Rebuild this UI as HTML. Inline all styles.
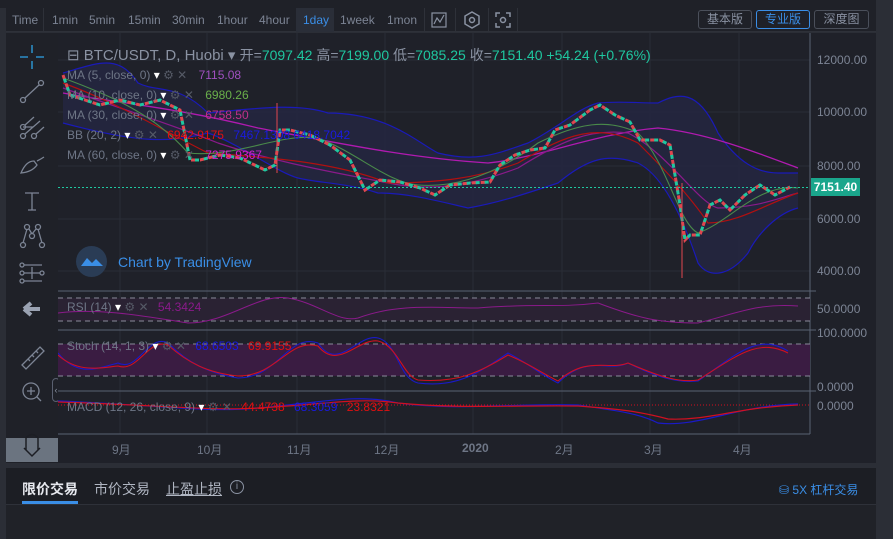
<!DOCTYPE html>
<html><head><meta charset="utf-8"><style>
*{margin:0;padding:0;box-sizing:border-box}
body{width:893px;height:539px;overflow:hidden;background:#2b2e36;font-family:"Liberation Sans","Noto Sans CJK SC",sans-serif;position:relative}
.abs{position:absolute}
.tb{left:6px;top:8px;width:870px;height:24px;background:#1f2128;border-bottom:1px solid #2e3139;font-size:12px;color:#7c8494}
.tb span{position:absolute;top:5px}
.btn{position:absolute;top:2px;height:19px;border:1px solid #4a4f5a;border-radius:3px;font-size:12px;color:#8a92a2;text-align:center;line-height:17px;width:54px}
.lbl{font-size:12px;color:#6e7686;position:absolute;white-space:nowrap}
</style></head><body>
<div class="abs" style="left:0;top:0;width:893px;height:8px;background:#1f2128"></div>
<div class="abs" style="left:876px;top:0;width:17px;height:539px;background:#2b2e36"></div>
<div class="abs tb">
<span style="left:6px">Time</span>
<div class="abs" style="left:37px;top:0;width:1px;height:24px;background:#2e3139"></div>
<span style="left:46px">1min</span><span style="left:83px">5min</span><span style="left:122px">15min</span><span style="left:166px">30min</span><span style="left:211px">1hour</span><span style="left:253px">4hour</span>
<div class="abs" style="left:290px;top:0;width:38px;height:24px;background:#2a2e38"></div>
<span style="left:297px;color:#3a8ee6">1day</span><span style="left:334px">1week</span><span style="left:381px">1mon</span>
<div class="abs" style="left:418px;top:0;width:1px;height:24px;background:#2e3139"></div>
<svg class="abs" style="left:425px;top:4px" width="16" height="16"><rect x="1" y="1" width="14" height="14" fill="none" stroke="#8a92a2" stroke-width="1.2"/><path d="M3 12 L6 6 L9 10 L13 3" fill="none" stroke="#8a92a2" stroke-width="1.2"/></svg>
<div class="abs" style="left:449px;top:0;width:1px;height:24px;background:#2e3139"></div>
<svg class="abs" style="left:457px;top:3px" width="18" height="18"><path d="M9 1 L16 5 L16 13 L9 17 L2 13 L2 5 Z" fill="none" stroke="#8a92a2" stroke-width="1.5"/><circle cx="9" cy="9" r="2.5" fill="none" stroke="#8a92a2" stroke-width="1.5"/></svg>
<div class="abs" style="left:482px;top:0;width:1px;height:24px;background:#2e3139"></div>
<svg class="abs" style="left:489px;top:4px" width="16" height="16" fill="none" stroke="#8a92a2" stroke-width="1.5"><path d="M1 5V1H5M11 1H15V5M15 11V15H11M5 15H1V11"/><circle cx="8" cy="8" r="2.5"/></svg>
<div class="abs" style="left:511px;top:0;width:1px;height:24px;background:#2e3139"></div>
<div class="btn" style="left:692px">基本版</div>
<div class="btn" style="left:750px;border-color:#3a8ee6;color:#3a8ee6">专业版</div>
<div class="btn" style="left:808px;width:55px">深度图</div>
</div>
<div class="abs" style="left:6px;top:33px;width:52px;height:430px;background:#1f2128"></div>
<svg class="abs" style="left:6px;top:33px" width="52" height="430" fill="none" stroke="#7c8494" stroke-width="1.3">
<path d="M26 12V20M26 28V36M14 24H22M30 24H38" stroke="#2ea3e8"/>
<circle cx="17" cy="67" r="2.5"/><circle cx="35" cy="50" r="2.5"/><path d="M19 65L33 52"/>
<circle cx="17" cy="94" r="2.5"/><circle cx="17" cy="103" r="2.5"/><circle cx="28" cy="103" r="2.5"/><path d="M19 92L28 84M19 101L34 88M30 101L38 94M17 94H27"/>
<path d="M15 140 Q20 128 28 128 L31 132 Q26 139 15 140 Z M31 128 Q35 126 38 124"/>
<path d="M19 160H33M26 160V177M22 177H30"/>
<circle cx="17" cy="212" r="2.5"/><circle cx="36" cy="212" r="2.5"/><circle cx="21" cy="194" r="2.5"/><circle cx="32" cy="194" r="2.5"/><circle cx="26" cy="203" r="2.5"/><path d="M17 210L21 196M36 210L32 196M23 196L26 201M30 196L26 201"/>
<circle cx="16" cy="232" r="2"/><circle cx="16" cy="240" r="2"/><circle cx="16" cy="248" r="2"/><circle cx="36" cy="240" r="2"/><path d="M18 232H36M18 240H34M18 248H36M26 234V246"/>
<path d="M18 276L25 270M18 276L25 282M18 276H34" stroke="#9aa2b2" stroke-width="4"/>
<path d="M16 332L34 314L38 318L20 336Z M22 326L24 328M26 322L28 324M30 318L32 320"/>
<circle cx="25" cy="358" r="8"/><path d="M21 358H29M25 354V362M31 364L35 368"/>
</svg>
<div class="abs" style="left:6px;top:438px;width:52px;height:24px;background:#6b7480"></div>
<svg class="abs" style="left:6px;top:428px" width="52" height="34" fill="none" stroke="#1c1e24" stroke-width="1.5"><path d="M20 22V10Q26 3 32 10V22M18 20L26 28L34 20"/></svg>
<div class="abs" style="left:52px;top:378px;width:8px;height:24px;border:1px solid #5a6070;border-radius:4px;background:#1f2128;color:#8a92a2;font-size:9px;line-height:22px;text-align:center">‹</div>
<svg class="abs" style="left:58px;top:33px" width="818" height="430">
<rect width="818" height="430" fill="#1f2129"/>
<g stroke="#2a2d36" stroke-width="1">
<path d="M62 0V401M149 0V401M239 0V401M327 0V401M415 0V401M504 0V401M592 0V401M681 0V401"/>
<path d="M0 27H752M0 79H752M0 133H752M0 186H752M0 238H752"/>
</g>
<path d="M752 0V401" stroke="#5a6272"/>
<path d="M0 258H758M0 297H758M0 358H758M0 401H752" stroke="#5a6272"/>
<path d="M5 40 C40 30 60 20 80 50 C100 60 120 50 150 80 C200 75 240 70 270 80 C330 80 360 110 380 120 C420 130 440 120 470 110 C500 95 520 75 540 70 C560 68 580 70 600 70 C620 60 640 55 660 100 C680 130 700 140 720 140 L740 140 L740 175 C720 180 700 200 690 220 C670 245 650 245 640 230 C620 170 600 140 580 130 C550 120 530 125 500 150 C470 160 440 170 410 175 C380 168 350 160 320 160 C290 150 260 150 240 145 C220 140 180 110 150 100 C110 110 80 110 5 90 Z" fill="#23263f" opacity="0.9"/>
<path d="M5 40 C40 30 60 20 80 50 C100 60 120 50 150 80 C200 75 240 70 270 80 C330 80 360 110 380 120 C420 130 440 120 470 110 C500 95 520 75 540 70 C560 68 580 70 600 70 C620 60 640 55 660 100 C680 130 700 140 720 140 L740 140" fill="none" stroke="#1a1ab8" stroke-width="1.2"/>
<path d="M5 90 C80 110 110 110 150 100 C180 110 220 140 240 145 C260 150 290 150 320 160 C350 160 380 168 410 175 C440 170 470 160 500 150 C530 125 550 120 580 130 C600 140 620 170 640 230 C650 245 670 245 690 220 C700 200 720 180 740 175" fill="none" stroke="#1a1ab8" stroke-width="1.2"/>
<path d="M5 60 C60 70 120 75 200 95 C280 110 350 125 430 130 C480 125 540 100 600 95 C650 100 700 120 740 135" fill="none" stroke="#b01ab0" stroke-width="1.3"/>
<path d="M5 55 C60 75 110 90 160 110 C220 130 280 140 330 150 C380 160 420 150 460 135 C500 110 530 95 570 100 C610 120 640 170 660 175 C700 175 720 165 740 160" fill="none" stroke="#8a1a8a" stroke-width="1.2"/>
<path d="M5 50 C60 70 110 100 150 120 C220 125 280 130 330 150 C380 150 420 145 460 130 C510 100 540 90 580 110 C600 130 630 160 650 190 C680 190 710 170 740 160" fill="none" stroke="#b01010" stroke-width="1.2"/>
<path d="M5 45 C60 65 100 85 130 120 C180 125 220 100 260 105 C300 120 330 150 360 152 C400 155 440 140 480 110 C520 90 550 85 580 100 C610 130 620 190 640 200 C670 190 700 150 740 155" fill="none" stroke="#4a8a4a" stroke-width="1.1"/>
<polyline points="5,42 12,62 27,67 42,72 62,67 82,72 102,67 122,77 132,127 142,127 162,122 182,125 207,137 217,132 222,97 232,97 252,102 272,112 292,127 307,157 322,147 342,149 362,155 377,162 392,152 412,150 432,149 442,132 457,122 472,117 487,115 497,97 512,92 532,77 542,72 557,82 572,89 582,107 602,107 612,112 622,172 627,207 632,202 642,202 652,172 662,167 672,177 687,162 702,152 717,162 732,154" fill="none" stroke="#e0474f" stroke-width="3" stroke-dasharray="5 4"/>
<polyline points="5,42 12,62 27,67 42,72 62,67 82,72 102,67 122,77 132,127 142,127 162,122 182,125 207,137 217,132 222,97 232,97 252,102 272,112 292,127 307,157 322,147 342,149 362,155 377,162 392,152 412,150 432,149 442,132 457,122 472,117 487,115 497,97 512,92 532,77 542,72 557,82 572,89 582,107 602,107 612,112 622,172 627,207 632,202 642,202 652,172 662,167 672,177 687,162 702,152 717,162 732,154" fill="none" stroke="#1fc7a0" stroke-width="3" stroke-dasharray="4 5" stroke-dashoffset="5"/>
<path d="M624 150V245M219 70V140" stroke="#e0474f" stroke-width="1"/>
<path d="M0 154.5H752" stroke="#1fc7a0" stroke-dasharray="2 2"/>
<rect x="0" y="265" width="752" height="23" fill="#2a2233"/>
<path d="M0 265H752M0 288H752" stroke="#8a8a9a" stroke-dasharray="5 4"/>
<path d="M0 280 C40 275 80 282 130 290 C170 290 200 260 230 265 C260 270 280 290 300 285 C340 270 380 275 420 275 C480 270 500 275 540 270 C580 285 600 290 640 290 C680 280 700 270 740 273" fill="none" stroke="#8a1a8a" stroke-width="1"/>
<rect x="0" y="311" width="752" height="32" fill="#3a1c42"/>
<path d="M0 311H752M0 343H752" stroke="#8a8a9a" stroke-dasharray="5 4"/>
<path d="M0 320 C20 345 40 335 60 330 C80 340 90 300 110 310 C130 330 150 340 180 345 C220 345 230 300 260 310 C280 340 300 300 320 305 C340 310 340 345 360 350 C400 355 420 340 450 320 C470 330 480 340 500 350 C530 320 550 340 570 330 C600 345 620 350 640 348 C680 320 700 300 730 318" fill="none" stroke="#1a1ac8" stroke-width="1.1"/>
<path d="M0 322 C20 340 40 335 60 333 C80 340 90 305 110 312 C130 330 150 340 180 343 C220 343 230 305 260 313 C280 338 300 305 320 308 C340 313 345 343 360 347 C400 350 420 340 450 322 C470 330 480 338 500 348 C530 322 550 338 570 330 C600 343 620 350 640 347 C680 322 700 305 730 320" fill="none" stroke="#d01020" stroke-width="1.1"/>
<path d="M0 372H752" stroke="#d01020" stroke-dasharray="1 2"/>
<path d="M0 368 C100 372 150 380 200 375 C260 370 300 360 340 370 C400 378 460 370 520 372 C560 378 580 380 600 390 C640 395 680 372 740 371" fill="none" stroke="#1a1ac8" stroke-width="1.2"/>
<path d="M0 369 C100 372 150 378 200 375 C260 372 300 364 340 370 C400 376 460 372 520 373 C560 376 580 378 610 386 C650 388 680 374 740 372" fill="none" stroke="#d01020" stroke-width="1.2"/>
</svg>
<div class="lbl" style="left:817px;top:53px;color:#7c8494">12000.00</div>
<div class="lbl" style="left:817px;top:105px;color:#7c8494">10000.00</div>
<div class="lbl" style="left:817px;top:159px;color:#7c8494">8000.00</div>
<div class="lbl" style="left:817px;top:212px;color:#7c8494">6000.00</div>
<div class="lbl" style="left:817px;top:264px;color:#7c8494">4000.00</div>
<div class="abs" style="left:811px;top:178px;width:49px;height:18px;background:#1aa68c;color:#fff;font-size:12px;font-weight:bold;line-height:18px;text-align:center">7151.40</div>
<div class="lbl" style="left:817px;top:302px;color:#7c8494">50.0000</div>
<div class="lbl" style="left:817px;top:326px;color:#7c8494">100.0000</div>
<div class="lbl" style="left:817px;top:380px;color:#7c8494">0.0000</div>
<div class="lbl" style="left:817px;top:399px;color:#7c8494">0.0000</div>
<div class="lbl" style="left:112px;top:441px">9月</div>
<div class="lbl" style="left:197px;top:441px">10月</div>
<div class="lbl" style="left:287px;top:441px">11月</div>
<div class="lbl" style="left:374px;top:441px">12月</div>
<div class="lbl" style="left:462px;top:441px;font-weight:bold">2020</div>
<div class="lbl" style="left:555px;top:441px">2月</div>
<div class="lbl" style="left:644px;top:441px">3月</div>
<div class="lbl" style="left:733px;top:441px">4月</div>
<div class="lbl" style="left:67px;top:45px;font-size:15px;color:#8a92a2">⊟ BTC/USDT, D, Huobi ▾ <span style="font-size:14px">开=<span style="color:#1fc7a0">7097.42</span> 高=<span style="color:#1fc7a0">7199.00</span> 低=<span style="color:#1fc7a0">7085.25</span> 收=<span style="color:#1fc7a0">7151.40</span> <span style="color:#1fc7a0">+54.24 (+0.76%)</span></span></div>
<div class="lbl" style="left:67px;top:68px">MA (5, close, 0) <span style="color:#fff">▾</span> <span style="color:#555a66">⚙ ✕</span> <span style="color:#a050c0;margin-left:8px">7115.08</span></div>
<div class="lbl" style="left:67px;top:88px">MA (10, close, 0) <span style="color:#fff">▾</span> <span style="color:#555a66">⚙ ✕</span> <span style="color:#6ab04a;margin-left:8px">6980.26</span></div>
<div class="lbl" style="left:67px;top:108px">MA (30, close, 0) <span style="color:#fff">▾</span> <span style="color:#555a66">⚙ ✕</span> <span style="color:#c0308a;margin-left:8px">6758.50</span></div>
<div class="lbl" style="left:67px;top:128px">BB (20, 2) <span style="color:#fff">▾</span> <span style="color:#555a66">⚙ ✕</span> <span style="color:#e01010;margin-left:6px">6942.9175</span> <span style="color:#1a1ae0;margin-left:6px">7467.1308</span> <span style="color:#1a1ae0">6418.7042</span></div>
<div class="lbl" style="left:67px;top:148px">MA (60, close, 0) <span style="color:#fff">▾</span> <span style="color:#555a66">⚙ ✕</span> <span style="color:#d020d0;margin-left:8px">7275.9367</span></div>
<div class="abs" style="left:76px;top:246px;width:31px;height:31px;border-radius:50%;background:#2a3c55"></div>
<svg class="abs" style="left:80px;top:254px" width="24" height="14"><path d="M1 12L7 4L12 9L16 5L23 12Z" fill="#3a8ee6"/></svg>
<div class="lbl" style="left:118px;top:254px;font-size:14px;color:#3a8ee6">Chart by TradingView</div>
<div class="lbl" style="left:67px;top:300px">RSI (14) <span style="color:#fff">▾</span> <span style="color:#555a66">⚙ ✕</span> <span style="color:#8a1a8a;margin-left:6px">54.3424</span></div>
<div class="lbl" style="left:67px;top:339px">Stoch (14, 1, 3) <span style="color:#fff">▾</span> <span style="color:#555a66">⚙ ✕</span> <span style="color:#1a1ae0;margin-left:6px">68.6503</span> <span style="color:#e01010;margin-left:6px">69.9155</span></div>
<div class="lbl" style="left:67px;top:400px">MACD (12, 26, close, 9) <span style="color:#fff">▾</span> <span style="color:#555a66">⚙ ✕</span> <span style="color:#e01010;margin-left:6px">44.4738</span> <span style="color:#1a1ae0;margin-left:6px">68.3059</span> <span style="color:#e01010;margin-left:6px">23.8321</span></div>
<div class="abs" style="left:6px;top:468px;width:870px;height:71px;background:#1c1e24"></div>
<div class="abs" style="left:6px;top:504px;width:870px;height:1px;background:#2e3139"></div>
<div class="abs" style="left:6px;top:505px;width:870px;height:34px;background:#202228"></div>
<div class="lbl" style="left:22px;top:479px;font-size:14px;color:#e6e8ee;font-weight:bold">限价交易</div>
<div class="abs" style="left:22px;top:501px;width:56px;height:3px;background:#3a8ee6"></div>
<div class="lbl" style="left:94px;top:479px;font-size:14px;color:#b0b6c2">市价交易</div>
<div class="lbl" style="left:166px;top:479px;font-size:14px;color:#b0b6c2;text-decoration:underline">止盈止损</div>
<div class="abs" style="left:230px;top:480px;width:14px;height:14px;border:1px solid #8a92a2;border-radius:50%;color:#8a92a2;font-size:10px;text-align:center;line-height:12px">i</div>
<div class="lbl" style="left:779px;top:481px;font-size:12px;color:#3a8ee6">⛁ 5X 杠杆交易</div>
</body></html>
